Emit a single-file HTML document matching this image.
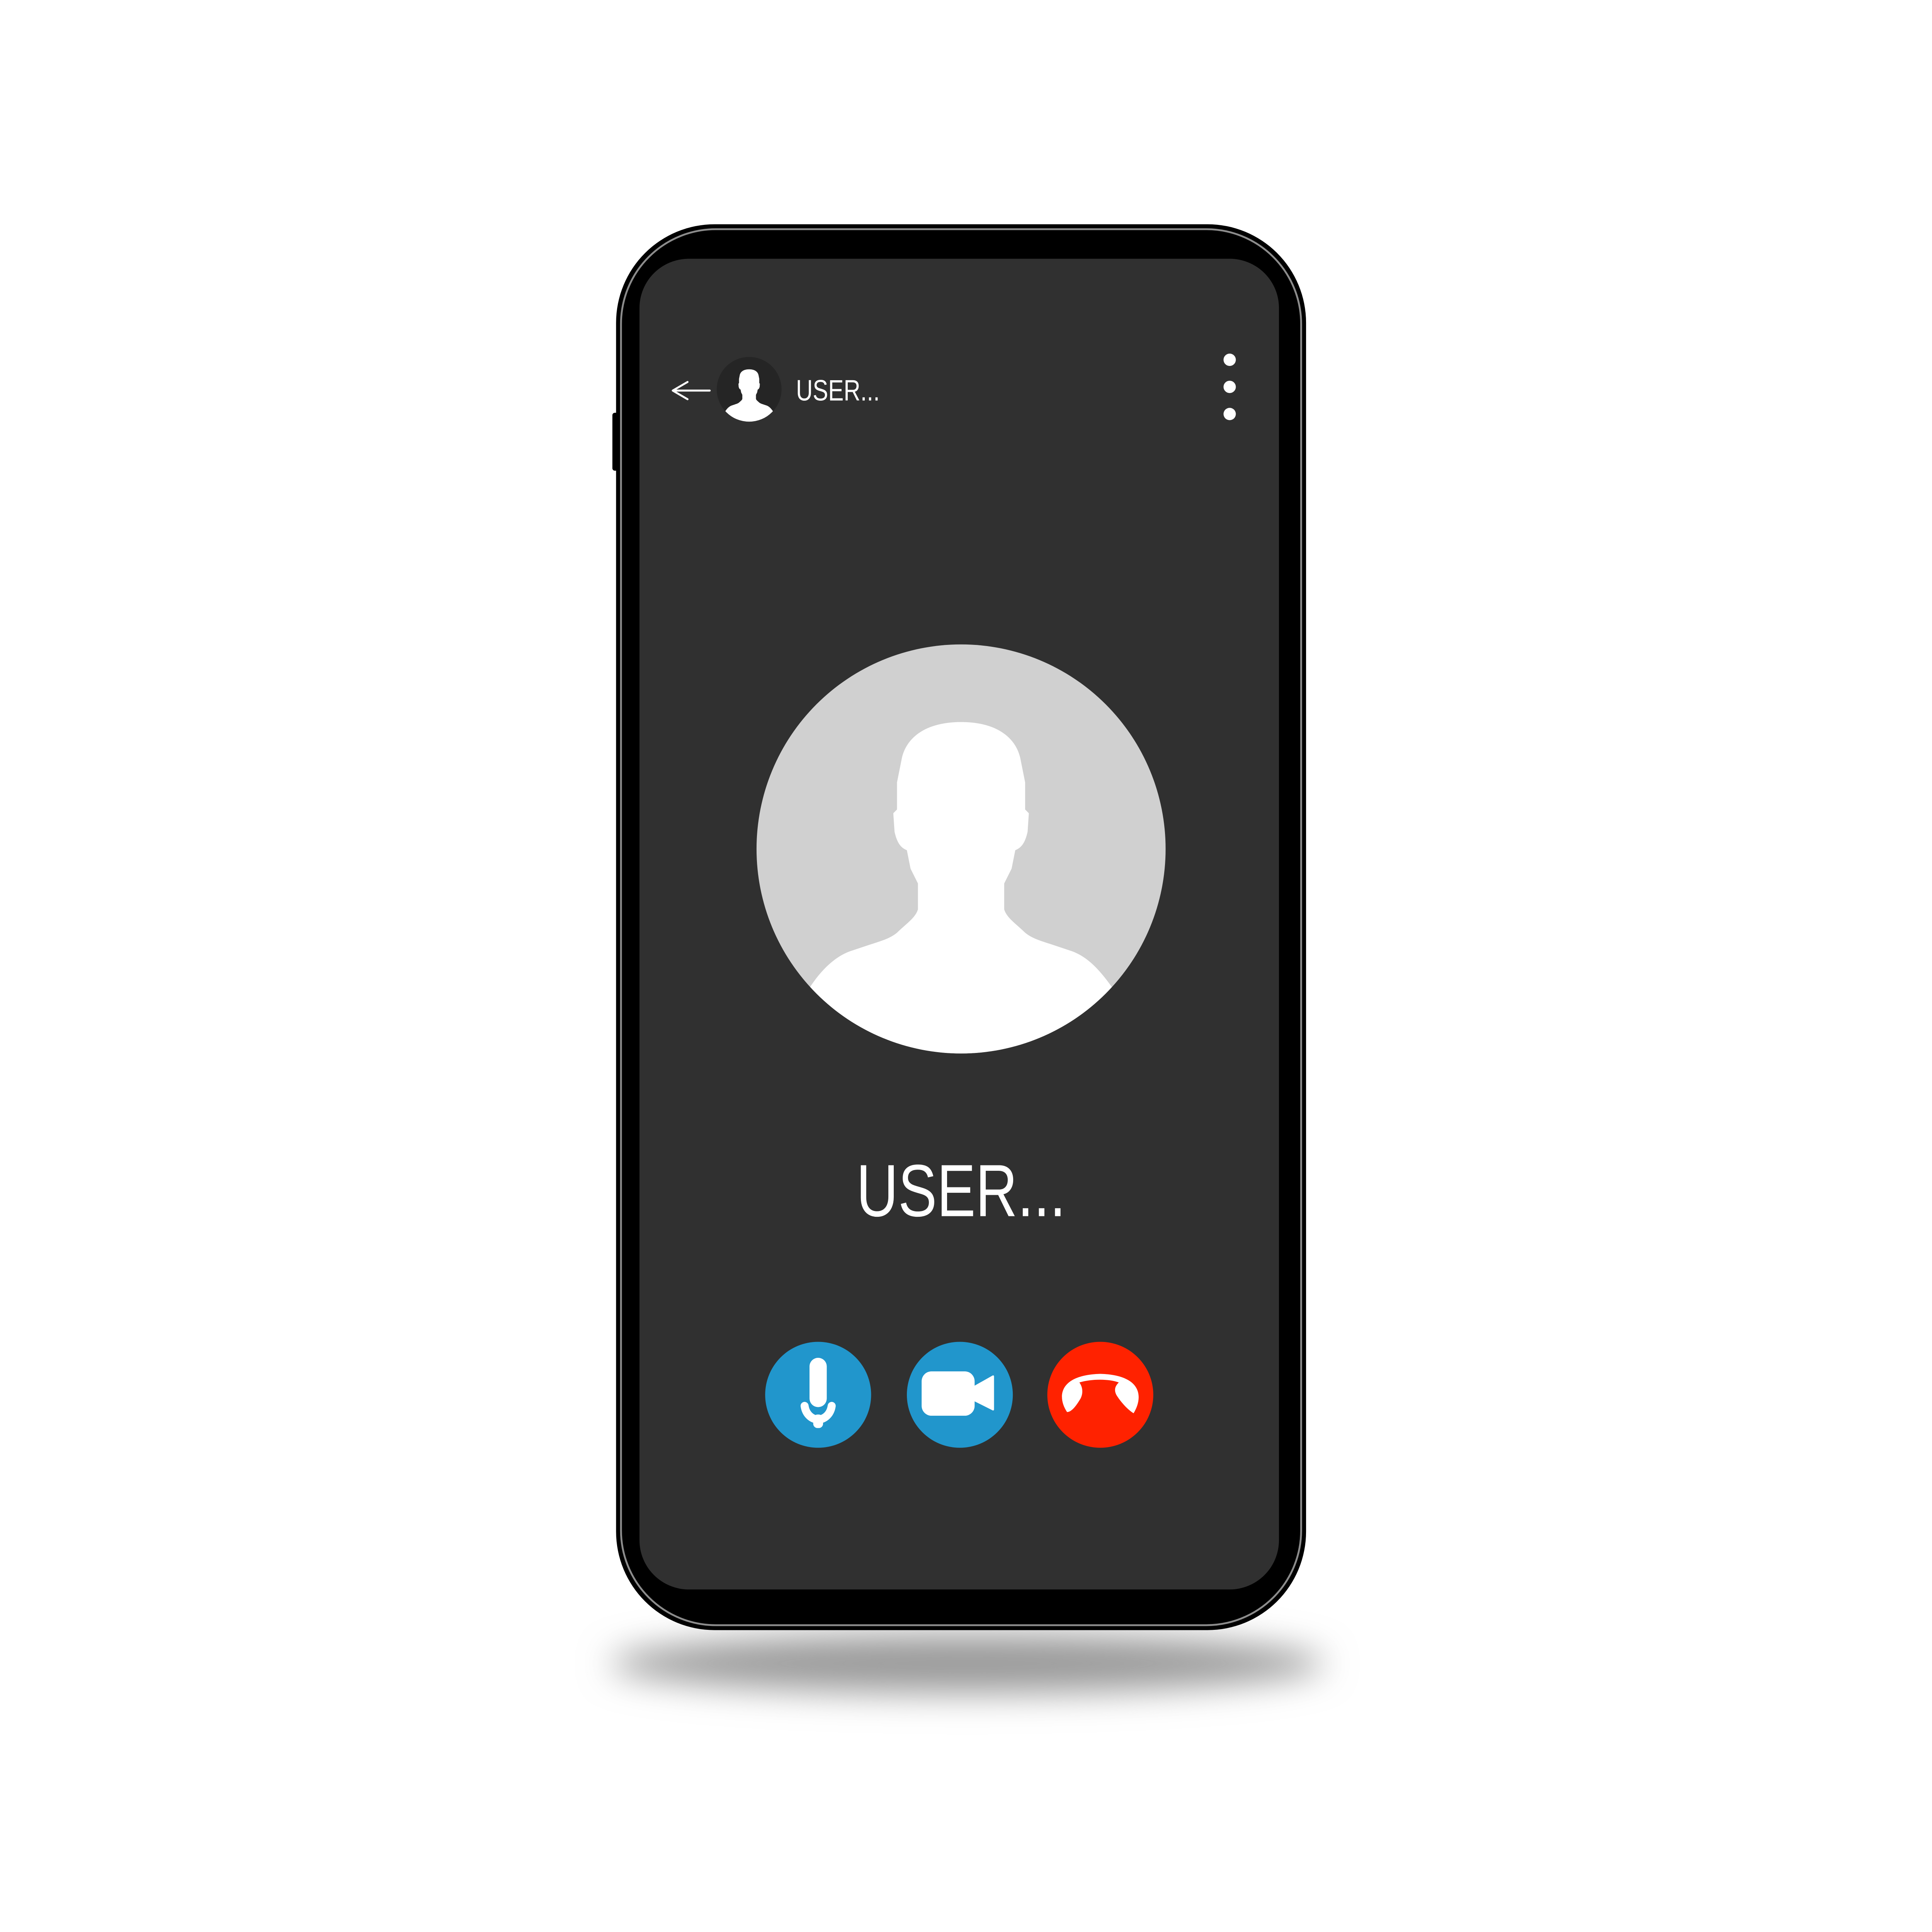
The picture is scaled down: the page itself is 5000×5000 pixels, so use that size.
<!DOCTYPE html>
<html><head><style>html,body{margin:0;padding:0;background:#fff;}svg{display:block}</style></head>
<body>
<svg width="5000" height="5000" viewBox="0 0 1568 1568" xmlns="http://www.w3.org/2000/svg">
<defs>
<filter id="bl" x="-50%" y="-200%" width="200%" height="500%"><feGaussianBlur stdDeviation="14"/></filter>
<clipPath id="cc"><circle cx="780" cy="689" r="166"/></clipPath>
<g id="sil">
<circle cx="780" cy="689" r="166" fill="#d0d0d0"/>
<path clip-path="url(#cc)" fill="#fff" d="M780,586 C752,586 736,598 732,615 L728,635 L728,657 L725,660 L726,675 C728,684 731,688 736,690 L739,705 L745,717 L745,738 C743,745 735,750 728,757 C722,762 714,764 705,767 L690,772 C676,777 664,790 655,805 L640,900 L920,900 L905,805 C895,790 884,777 870,772 L855,767 C846,764 838,762 832,757 C825,750 817,745 815,738 L815,717 L821,705 L824,690 C829,688 832,684 834,675 L835,660 L832,657 L832,635 L828,615 C824,598 808,586 780,586 Z"/>
</g>
</defs>
<ellipse cx="785" cy="1350" rx="290" ry="24" fill="#9a9a9a" filter="url(#bl)"/>
<rect x="497" y="335" width="8" height="47" rx="2" fill="#000"/>
<rect x="500" y="182" width="560" height="1141" rx="80" fill="#000"/>
<rect x="504" y="186" width="552" height="1133" rx="77" fill="none" stroke="#fff" stroke-opacity="0.55" stroke-width="1.5"/>
<rect x="519" y="210" width="519" height="1080" rx="40" fill="#303030"/>
<path d="M576,317 L546,317 M558,310 L546,317 L558,324" stroke="#fff" stroke-width="1.6" fill="none" stroke-linecap="round" stroke-linejoin="round"/>
<circle cx="608" cy="316" r="26.3" fill="#252525"/>
<g transform="translate(608,316) scale(0.158) translate(-780,-689)">
<clipPath id="cc2"><circle cx="780" cy="689" r="166"/></clipPath>
<path clip-path="url(#cc2)" fill="#fff" d="M780,586 C752,586 736,598 732,615 L728,635 L728,657 L725,660 L726,675 C728,684 731,688 736,690 L739,705 L745,717 L745,738 C743,745 735,750 728,757 C722,762 714,764 705,767 L690,772 C676,777 664,790 655,805 L640,900 L920,900 L905,805 C895,790 884,777 870,772 L855,767 C846,764 838,762 832,757 C825,750 817,745 815,738 L815,717 L821,705 L824,690 C829,688 832,684 834,675 L835,660 L832,657 L832,635 L828,615 C824,598 808,586 780,586 Z"/>
</g>
<text x="646" y="325" font-family="Liberation Sans, sans-serif" font-size="24" fill="#fff" textLength="68" lengthAdjust="spacingAndGlyphs">USER...</text>
<circle cx="998" cy="292" r="5" fill="#fff"/>
<circle cx="998" cy="314" r="5" fill="#fff"/>
<circle cx="998" cy="336" r="5" fill="#fff"/>
<use href="#sil"/>
<text x="695" y="987" font-family="Liberation Sans, sans-serif" font-size="60" fill="#fff" textLength="170" lengthAdjust="spacingAndGlyphs">USER...</text>
<circle cx="664" cy="1132" r="43" fill="#2196cc"/>
<rect x="657" y="1102" width="14" height="40" rx="7" fill="#fff"/>
<path d="M653,1141 C654,1148 659,1152 664,1152 C669,1152 674,1148 675,1141" stroke="#fff" stroke-width="6.5" fill="none" stroke-linecap="round"/>
<rect x="660" y="1148" width="8" height="11" rx="3.5" fill="#fff"/>
<circle cx="779" cy="1132" r="43" fill="#2196cc"/>
<rect x="748" y="1113" width="43" height="36" rx="8" fill="#fff"/>
<path d="M790,1126 L806,1117 L806,1144 L790,1136 Z" fill="#fff" stroke="#fff" stroke-width="1.5" stroke-linejoin="round"/>
<circle cx="893" cy="1132" r="43" fill="#ff2200"/>
<path fill="#fff" d="M866,1146 C858,1134 859,1116 893,1115 C927,1116 928,1134 920,1147 C915,1144 909,1137 906,1132 C904,1128 905,1125 908,1122 C900,1119 886,1119 876,1122 C879,1126 879,1131 877,1135 C874,1140 870,1146 866,1146 Z"/>
</svg>
</body></html>
